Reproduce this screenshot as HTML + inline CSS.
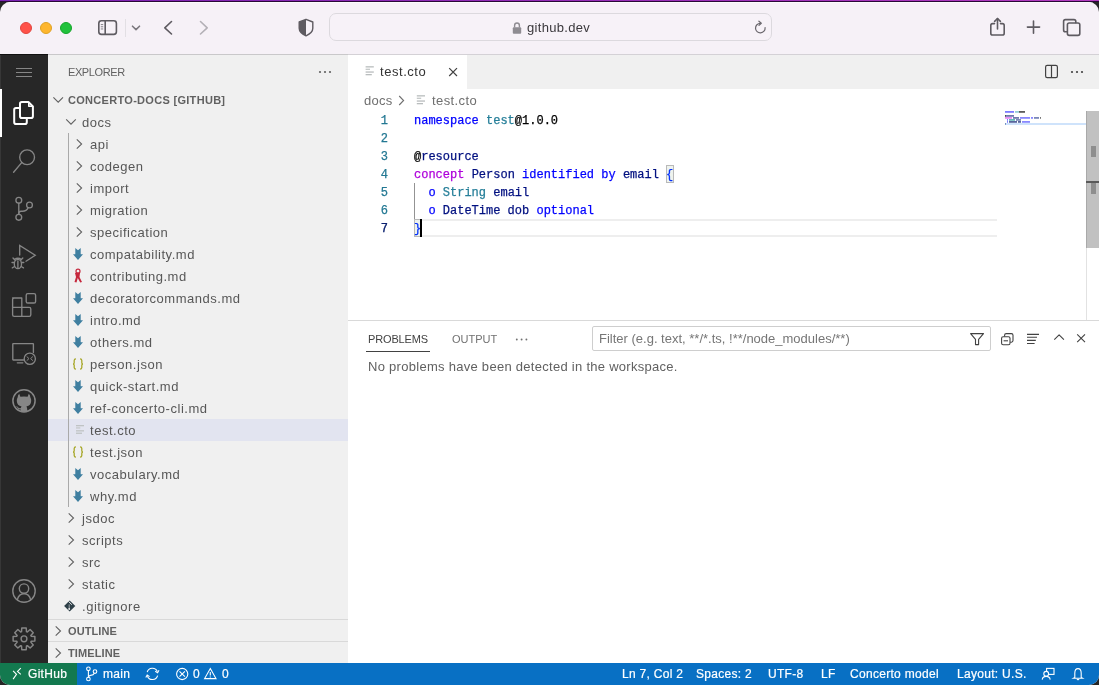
<!DOCTYPE html><html><head><meta charset="utf-8"><style>
*{margin:0;padding:0;box-sizing:border-box}
html,body{width:1099px;height:685px;overflow:hidden;background:#262626}
body{position:relative;font-family:"Liberation Sans",sans-serif;color:#616161;-webkit-font-smoothing:antialiased}
#win div{will-change:transform}
.a{position:absolute}
svg{position:absolute;overflow:visible}
#topline{left:0;top:0;width:1099px;height:1px;background:linear-gradient(90deg,#7a22b2,#9a2fb8 60%,#b43cc0)}
#topline2{left:0;top:1px;width:1099px;height:1px;background:#2a0838}
#win{left:0;top:0;width:1099px;height:685px;clip-path:inset(2px 0 0 0 round 10px);background:#f6f1f7}
#hl{left:0;top:2px;width:1099px;height:1px;background:#fdfcfd}
#tbborder{left:0;top:54px;width:1099px;height:1px;background:#d4d1d6}
.tl{width:12px;height:12px;border-radius:50%;top:22px}
#url{left:329px;top:13px;width:443px;height:28px;border:1px solid #dcd9de;border-radius:7px;background:#f7f2f8}
#urltext{left:527px;top:14px;height:28px;line-height:28px;font-size:13px;color:#3b393d;letter-spacing:0.3px}
#ab{left:0;top:55px;width:48px;height:608px;background:#272727;border-left:1px solid #373737}
#sb{left:48px;top:55px;width:300px;height:608px;background:#f0f0f0}
#ed{left:348px;top:55px;width:751px;height:608px;background:#fff}
#tabs{left:348px;top:55px;width:751px;height:34px;background:#f0f0f0}
#tab{left:348px;top:55px;width:119px;height:34px;background:#fff}
#status{left:77px;top:663px;width:1022px;height:22px;background:#0870c4}
#remote{left:0;top:663px;width:77px;height:22px;background:#13794f}
.t13{position:absolute;font-size:13px;line-height:22px;height:22px;padding-top:1px;white-space:nowrap;letter-spacing:0.52px;color:#575757}
.b11{position:absolute;font-size:11px;font-weight:bold;line-height:22px;height:22px;white-space:nowrap;color:#616161}
.code{position:absolute;left:414px;height:18px;line-height:18px;font-family:"Liberation Mono",monospace;font-size:12px;white-space:pre;color:#000;-webkit-text-stroke:0.25px currentColor}
.ln{position:absolute;left:360px;width:28px;text-align:right;height:18px;line-height:18px;font-family:"Liberation Mono",monospace;font-size:12px;color:#237893;-webkit-text-stroke:0.25px currentColor}
.bb{color:#0431fa}.k{color:#0000ff}.tt{color:#267f99}.v{color:#001080}.p{color:#af00db}
.st{position:absolute;top:663px;height:22px;line-height:22px;font-size:12px;color:#fff;white-space:nowrap;letter-spacing:0.3px;-webkit-text-stroke:0.2px #fff}
</style></head><body>
<div class="a" id="topline"></div><div class="a" id="topline2"></div>
<div class="a" id="win">
<div class="a" id="hl"></div><div class="a" id="tbborder"></div>
<div class="a tl" style="left:20px;background:#ff5249;border:0.6px solid #e0443e"></div>
<div class="a tl" style="left:40px;background:#feb62e;border:0.6px solid #dea123"></div>
<div class="a tl" style="left:60px;background:#21c23c;border:0.6px solid #14a42a"></div>
<div class="a" id="url"></div><div class="a" id="urltext">github.dev</div>
<svg style="left:0;top:0" width="1099" height="54" viewBox="0 0 1099 54">
  <g fill="none" stroke="#5e5b61" stroke-width="1.6" stroke-linecap="round" stroke-linejoin="round">
   <rect x="98.8" y="20.8" width="17.6" height="13.6" rx="2.6"/>
   <line x1="105.2" y1="21" x2="105.2" y2="34.2"/>
   <path d="M132.5 26.2 L136 29.6 L139.5 26.2" stroke="#7b787e"/>
   <path d="M171.5 21.5 L164.8 27.8 L171.5 34"/>
   <path d="M200.5 21.5 L207.2 27.8 L200.5 34" stroke="#b3b0b6"/>
   <path d="M760.4 23.3 A4.8 4.8 0 1 0 765.1 27.6" stroke-width="1.2" stroke="#69666c"/>
   <path d="M758.9 21.2 L761.3 23.3 L759 25.4" stroke-width="1.2" stroke="#69666c"/>
   <path d="M997.5 18.5 V29" />
   <path d="M994.6 21.4 L997.5 18.5 L1000.4 21.4"/>
   <path d="M994.5 23.6 H992.6 Q990.8 23.6 990.8 25.4 V33.2 Q990.8 35 992.6 35 H1002.4 Q1004.2 35 1004.2 33.2 V25.4 Q1004.2 23.6 1002.4 23.6 H1000.5"/>
   <path d="M1033.5 21 V33.2 M1027.4 27.1 H1039.6"/>
   <path d="M1066.6 31.8 H1065.4 Q1063.6 31.8 1063.6 30 V21.4 Q1063.6 19.6 1065.4 19.6 H1074 Q1075.8 19.6 1075.8 21.4 V22.6"/>
   <rect x="1067.4" y="23" width="12.4" height="12.4" rx="1.8"/>
  </g>
  <line x1="125.5" y1="19" x2="125.5" y2="37" stroke="#e2dfe4" stroke-width="1"/>
  <g fill="#8e8b91"><rect x="100.8" y="24" width="2.4" height="1.1"/><rect x="100.8" y="26.2" width="2.4" height="1.1"/><rect x="100.8" y="28.4" width="2.4" height="1.1"/></g>
  <path d="M306 19.3 L312.8 22 V28.3 Q312.8 32.8 306 35.8 Q299.2 32.8 299.2 28.3 V22 Z" fill="none" stroke="#5e5b61" stroke-width="1.4" stroke-linejoin="round"/>
  <path d="M306 19.3 L299.2 22 V28.3 Q299.2 32.8 306 35.8 Z" fill="#5e5b61"/>
  <rect x="512.8" y="27.2" width="8.4" height="6.6" rx="1" fill="#8f8c92"/>
  <path d="M514.6 27.5 V25.6 A2.4 2.6 0 0 1 519.4 25.6 V27.5" fill="none" stroke="#8f8c92" stroke-width="1.4"/>
 </svg>
<div class="a" id="ab"></div><div class="a" id="sb"></div><div class="a" id="ed"></div>
<div class="a" id="tabs"></div><div class="a" id="tab"></div>
<div class="a" style="left:0;top:54px;width:48px;height:1px;background:#111"></div>
<div class="a" style="left:48px;top:54px;width:300px;height:1px;background:#c9c8ca"></div>
<svg style="left:0;top:0" width="1" height="1">
<g fill="none" stroke="#868686" stroke-width="1.2">
 <path d="M16 68.5 H32 M16 72.5 H32 M16 76.5 H32"/>
</g>
<rect x="0" y="89" width="2" height="48" fill="#fff"/>
<g fill="none" stroke="#fff" stroke-width="2" stroke-linejoin="round">
 <path d="M20 107.9 H16 Q14.2 107.9 14.2 109.7 V122.2 Q14.2 124 16 124 H25 Q26.8 124 26.8 122.2 V118.1"/>
 <path d="M28.4 102 H21.8 Q20 102 20 103.8 V116.3 Q20 118.1 21.8 118.1 H31.1 Q32.9 118.1 32.9 116.3 V106.4 Z"/>
 <path d="M28.8 102.2 V106.2 H32.7" stroke-width="1.6"/>
</g>
<g fill="none" stroke="#868686" stroke-width="1.35" stroke-linecap="round">
 <circle cx="27.1" cy="157.2" r="7.4"/>
 <path d="M21.9 162.4 L13.6 172.3"/>
 <circle cx="18.8" cy="200.3" r="2.9"/>
 <circle cx="18.8" cy="217.3" r="2.9"/>
 <circle cx="29.5" cy="205" r="2.9"/>
 <path d="M18.8 203.2 V214.4"/>
 <path d="M28.2 207.6 Q26.5 211.2 22.5 211.2 H21 Q18.8 211.2 18.8 213.5"/>
 <path d="M19.7 255 V245.5 L35.2 255.3 L26 261.2"/>
 <ellipse cx="17.9" cy="264" rx="3.6" ry="4.6"/>
 <path d="M14.4 259.5 Q17.9 257 21.4 259.5"/>
 <path d="M12 262.5 H14.3 M21.5 262.5 H23.8 M12.3 267.8 L14.6 266.5 M23.5 267.8 L21.2 266.5 M13 258 L15 260 M22.8 258 L20.8 260 M17.9 261 V268"/>
 <path d="M12.6 298 H21.8 V316.4 H14.2 Q12.6 316.4 12.6 314.8 V299.6 Q12.6 298 14.2 298 Z" stroke-linejoin="round"/>
 <path d="M12.6 307.4 H29.2 Q30.8 307.4 30.8 309 V314.8 Q30.8 316.4 29.2 316.4 H21.8"/>
 <rect x="26.2" y="293.6" width="9.4" height="9.4" rx="1.6"/>
 <path d="M33.4 352.6 V344 Q33.4 343.6 33 343.6 H13.2 Q12.8 343.6 12.8 344 V359.6 Q12.8 360 13.2 360 H23.6"/>
 <path d="M17.3 362.8 H22.8"/>
 <circle cx="29.8" cy="358.8" r="5.6"/>
 <path d="M27 356.8 L29 358.6 L27 360.4 M32.6 356.8 L30.6 358.6 L32.6 360.4" stroke-width="1"/>
 <circle cx="24" cy="400.8" r="11.1" stroke-width="1.5"/>
 <circle cx="24" cy="591" r="11.2" stroke-width="1.4"/>
 <circle cx="24" cy="588.6" r="4.7" stroke-width="1.4"/>
 <path d="M17.3 599.6 Q19 593.8 24 593.8 Q29 593.8 30.7 599.6" stroke-width="1.4"/>
</g>
<path d="M19.2 393.8 L20.4 396.8 Q22 396.4 24 396.4 Q26 396.4 27.6 396.8 L28.8 393.8 Q30.2 395 30.4 397.6 Q31.4 399.2 31.2 401 Q31 405.6 26.4 406.4 Q27.2 407.4 27.2 409 V411.6 Q25.6 412 24 412 Q22.4 412 20.8 411.6 V409.5 Q18.4 410 17.2 407.6 Q16.8 406.6 15.8 406 Q17.4 406.4 18.2 407.4 Q19.2 408.6 20.8 408 Q21 407 21.6 406.4 Q17 405.6 16.8 401 Q16.6 399.2 17.6 397.6 Q17.8 395 19.2 393.8 Z" fill="#868686"/>
<g fill="none" stroke="#868686" stroke-width="1.25" stroke-linejoin="round">
 <path d="M21.53 631.61 L21.79 627.92 L26.21 627.92 L26.47 631.61 L27.33 631.97 L30.13 629.54 L33.26 632.67 L30.83 635.47 L31.19 636.33 L34.88 636.59 L34.88 641.01 L31.19 641.27 L30.83 642.13 L33.26 644.93 L30.13 648.06 L27.33 645.63 L26.47 645.99 L26.21 649.68 L21.79 649.68 L21.53 645.99 L20.67 645.63 L17.87 648.06 L14.74 644.93 L17.17 642.13 L16.81 641.27 L13.12 641.01 L13.12 636.59 L16.81 636.33 L17.17 635.47 L14.74 632.67 L17.87 629.54 L20.67 631.97 Z" stroke-width="1.45"/>
 <circle cx="24" cy="638.8" r="2.9" stroke-width="1.4"/>
</g>
</svg>
<div class="a" style="left:68px;top:61px;font-size:11px;line-height:22px;letter-spacing:-0.4px;color:#616161">EXPLORER</div>
<svg style="left:0;top:0" width="1" height="1"><g fill="#616161"><circle cx="320" cy="72" r="1.1"/><circle cx="325" cy="72" r="1.1"/><circle cx="330" cy="72" r="1.1"/></g></svg>
<div class="a" style="left:48px;top:419px;width:300px;height:22px;background:#e2e4f0"></div>
<div class="a" style="left:68px;top:133px;width:1px;height:374px;background:#a9a9a9"></div>
<div class="b11" style="left:68px;top:89px;letter-spacing:0.3px">CONCERTO-DOCS [GITHUB]</div>
<div class="t13" style="left:82px;top:111px">docs</div>
<div class="t13" style="left:90px;top:133px">api</div>
<div class="t13" style="left:90px;top:155px">codegen</div>
<div class="t13" style="left:90px;top:177px">import</div>
<div class="t13" style="left:90px;top:199px">migration</div>
<div class="t13" style="left:90px;top:221px">specification</div>
<div class="t13" style="left:90px;top:243px">compatability.md</div>
<div class="t13" style="left:90px;top:265px">contributing.md</div>
<div class="t13" style="left:90px;top:287px">decoratorcommands.md</div>
<div class="t13" style="left:90px;top:309px">intro.md</div>
<div class="t13" style="left:90px;top:331px">others.md</div>
<div class="t13" style="left:90px;top:353px">person.json</div>
<div class="t13" style="left:90px;top:375px">quick-start.md</div>
<div class="t13" style="left:90px;top:397px">ref-concerto-cli.md</div>
<div class="t13" style="left:90px;top:419px">test.cto</div>
<div class="t13" style="left:90px;top:441px">test.json</div>
<div class="t13" style="left:90px;top:463px">vocabulary.md</div>
<div class="t13" style="left:90px;top:485px">why.md</div>
<div class="t13" style="left:82px;top:507px">jsdoc</div>
<div class="t13" style="left:82px;top:529px">scripts</div>
<div class="t13" style="left:82px;top:551px">src</div>
<div class="t13" style="left:82px;top:573px">static</div>
<div class="t13" style="left:82px;top:595px">.gitignore</div>
<svg style="left:0;top:0" width="1" height="1"><g fill="none" stroke="#616161" stroke-width="1.1" stroke-linejoin="miter"><path d="M53.400000000000006 97.4 L58.2 102.2 L63.0 97.4"/><path d="M66.2 119.4 L71 124.2 L75.8 119.4"/><path d="M76.80000000000001 139.4 L81.60000000000001 144 L76.80000000000001 148.6"/><path d="M76.80000000000001 161.4 L81.60000000000001 166 L76.80000000000001 170.6"/><path d="M76.80000000000001 183.4 L81.60000000000001 188 L76.80000000000001 192.6"/><path d="M76.80000000000001 205.4 L81.60000000000001 210 L76.80000000000001 214.6"/><path d="M76.80000000000001 227.4 L81.60000000000001 232 L76.80000000000001 236.6"/><path d="M68.7 513.4 L73.5 518 L68.7 522.6"/><path d="M68.7 535.4 L73.5 540 L68.7 544.6"/><path d="M68.7 557.4 L73.5 562 L68.7 566.6"/><path d="M68.7 579.4 L73.5 584 L68.7 588.6"/></g></svg>
<svg style="left:0;top:0" width="1" height="1"><path d="M75.3 248 L78 250.2 L80.7 248 V254.2 H83 L78 260 L73 254.2 H75.3 Z" fill="#3f7fa0"/><g fill="#c5283d"><circle cx="78" cy="271.2" r="2" fill="none" stroke="#c5283d" stroke-width="1.2"/><path d="M75 273 Q78 272 80 273 L79.5 277 L82 282 L80.2 282.6 L77.8 278 L76.5 282.6 L74.5 282 L76 277 Z"/></g><path d="M75.3 292 L78 294.2 L80.7 292 V298.2 H83 L78 304 L73 298.2 H75.3 Z" fill="#3f7fa0"/><path d="M75.3 314 L78 316.2 L80.7 314 V320.2 H83 L78 326 L73 320.2 H75.3 Z" fill="#3f7fa0"/><path d="M75.3 336 L78 338.2 L80.7 336 V342.2 H83 L78 348 L73 342.2 H75.3 Z" fill="#3f7fa0"/><g fill="none" stroke="#a8a82c" stroke-width="1.3"><path d="M76 358.8 Q74.2 358.8 74.2 360.6 V362.8 Q74.2 364.0 73 364.0 Q74.2 364.0 74.2 365.2 V367.40000000000003 Q74.2 369.2 76 369.2"/><path d="M80 358.8 Q81.8 358.8 81.8 360.6 V362.8 Q81.8 364.0 83 364.0 Q81.8 364.0 81.8 365.2 V367.40000000000003 Q81.8 369.2 80 369.2"/></g><path d="M75.3 380 L78 382.2 L80.7 380 V386.2 H83 L78 392 L73 386.2 H75.3 Z" fill="#3f7fa0"/><path d="M75.3 402 L78 404.2 L80.7 402 V408.2 H83 L78 414 L73 408.2 H75.3 Z" fill="#3f7fa0"/><g fill="#bfc3c4"><rect x="76" y="425" width="8" height="1.3"/><rect x="76" y="427.4" width="4.3" height="1.1"/><rect x="76" y="430.2" width="8" height="1.3"/><rect x="76" y="432.6" width="6" height="1.3"/></g><g fill="none" stroke="#a8a82c" stroke-width="1.3"><path d="M76 446.8 Q74.2 446.8 74.2 448.6 V450.8 Q74.2 452.0 73 452.0 Q74.2 452.0 74.2 453.2 V455.40000000000003 Q74.2 457.2 76 457.2"/><path d="M80 446.8 Q81.8 446.8 81.8 448.6 V450.8 Q81.8 452.0 83 452.0 Q81.8 452.0 81.8 453.2 V455.40000000000003 Q81.8 457.2 80 457.2"/></g><path d="M75.3 468 L78 470.2 L80.7 468 V474.2 H83 L78 480 L73 474.2 H75.3 Z" fill="#3f7fa0"/><path d="M75.3 490 L78 492.2 L80.7 490 V496.2 H83 L78 502 L73 496.2 H75.3 Z" fill="#3f7fa0"/><g><path d="M69.7 600.4 L75.3 606 L69.7 611.6 L64.1 606 Z" fill="#2e3f48"/><path d="M68.6 601.5 L71.8 604.7" stroke="#f0f0f0" stroke-width="1"/><path d="M69.2 604.4 V609" stroke="#9aa2a6" stroke-width="1"/><circle cx="69.2" cy="609" r="0.9" fill="#f0f0f0"/></g></svg>
<div class="a" style="left:48px;top:619px;width:300px;height:1px;background:#d9d9d9"></div>
<div class="a" style="left:48px;top:641px;width:300px;height:1px;background:#d9d9d9"></div>
<div class="b11" style="left:68px;top:620px;letter-spacing:0.1px">OUTLINE</div>
<div class="b11" style="left:68px;top:642px;letter-spacing:0.1px">TIMELINE</div>
<svg style="left:0;top:0" width="1" height="1"><g fill="none" stroke="#616161" stroke-width="1.1"><path d="M55.699999999999996 626.4 L60.5 631 L55.699999999999996 635.6"/><path d="M55.699999999999996 648.4 L60.5 653 L55.699999999999996 657.6"/></g></svg>
<svg style="left:0;top:0" width="1" height="1"><g fill="#b9bdbe"><rect x="365.6" y="66.2" width="8.2" height="1.3"/><rect x="365.6" y="68.7" width="4.4" height="1.1"/><rect x="365.6" y="71.4" width="8.2" height="1.3"/><rect x="365.6" y="74" width="6.2" height="1.3"/></g><path d="M449.2 68.2 L457 76 M457 68.2 L449.2 76" stroke="#424242" stroke-width="1.2" fill="none"/><g fill="none" stroke="#424242" stroke-width="1.2"><rect x="1045.6" y="65.4" width="11.8" height="12.2" rx="1.6"/><path d="M1051.5 65.6 V77.4"/></g><g fill="#424242"><circle cx="1072" cy="72" r="1.1"/><circle cx="1077" cy="72" r="1.1"/><circle cx="1082" cy="72" r="1.1"/></g></svg>
<div class="a" style="left:380px;top:61px;font-size:13px;line-height:22px;color:#333;letter-spacing:0.55px">test.cto</div>
<div class="a" style="left:364px;top:90px;font-size:13px;line-height:22px;color:#6f6f6f;letter-spacing:0.3px">docs</div>
<div class="a" style="left:432px;top:90px;font-size:13px;line-height:22px;color:#6f6f6f;letter-spacing:0.4px">test.cto</div>
<svg style="left:0;top:0" width="1" height="1"><path d="M399.2 96 L403.6 100.5 L399.2 105" fill="none" stroke="#6f6f6f" stroke-width="1.1"/><g fill="#b9bdbe"><rect x="416.8" y="95.2" width="8.2" height="1.3"/><rect x="416.8" y="97.7" width="4.4" height="1.1"/><rect x="416.8" y="100.4" width="8.2" height="1.3"/><rect x="416.8" y="103" width="6.2" height="1.3"/></g></svg>
<div class="a" style="left:414px;top:219px;width:583px;height:18px;border-top:2px solid #eeeeee;border-bottom:2px solid #eeeeee"></div>
<div class="a" style="left:666px;top:165px;width:8px;height:18px;border:1px solid #b9b9b9;background:#eef3ee"></div>
<div class="a" style="left:414px;top:219px;width:7px;height:18px;border:1px solid #b9b9b9;background:#eef3ee"></div>
<div class="a" style="left:414px;top:183px;width:1px;height:36px;background:#939393"></div>
<div class="ln" style="top:112px">1</div>
<div class="code" style="top:112px"><span class="k">namespace</span> <span class="tt">test</span>@1.0.0</div>
<div class="ln" style="top:130px">2</div>
<div class="code" style="top:130px"></div>
<div class="ln" style="top:148px">3</div>
<div class="code" style="top:148px">@<span class="v">resource</span></div>
<div class="ln" style="top:166px">4</div>
<div class="code" style="top:166px"><span class="p">concept</span> <span class="v">Person</span> <span class="k">identified by</span> <span class="v">email</span> <span class="bb">{</span></div>
<div class="ln" style="top:184px">5</div>
<div class="code" style="top:184px">  <span class="k">o</span> <span class="tt">String</span> <span class="v">email</span></div>
<div class="ln" style="top:202px">6</div>
<div class="code" style="top:202px">  <span class="k">o</span> <span class="v">DateTime dob</span> <span class="k">optional</span></div>
<div class="ln" style="top:220px;color:#0b216f">7</div>
<div class="code" style="top:220px"><span class="bb">}</span></div>
<div class="a" style="left:420px;top:219px;width:2px;height:18px;background:#000"></div>
<svg style="left:0;top:0" width="1" height="1"><rect x="1005" y="123" width="81" height="2" fill="#cfe3fb"/><rect x="1005" y="111" width="9" height="1.8" fill="#5b5bff" opacity="0.8"/><rect x="1015" y="111" width="4" height="1.8" fill="#7fc4cc" opacity="0.8"/><rect x="1019" y="111" width="6" height="1.8" fill="#333" opacity="0.8"/><rect x="1005" y="115" width="1" height="1.8" fill="#222" opacity="0.8"/><rect x="1006" y="115" width="8" height="1.8" fill="#4b5a9a" opacity="0.8"/><rect x="1005" y="117" width="7" height="1.8" fill="#e070f0" opacity="0.8"/><rect x="1013" y="117" width="6" height="1.8" fill="#4b5a9a" opacity="0.8"/><rect x="1020" y="117" width="10" height="1.8" fill="#6a6aff" opacity="0.8"/><rect x="1031" y="117" width="2" height="1.8" fill="#6a6aff" opacity="0.8"/><rect x="1034" y="117" width="5" height="1.8" fill="#5a6aa8" opacity="0.8"/><rect x="1040" y="117" width="1" height="1.8" fill="#555" opacity="0.8"/><rect x="1007" y="119" width="1" height="1.8" fill="#5b5bff" opacity="0.8"/><rect x="1009" y="119" width="6" height="1.8" fill="#3ea7a8" opacity="0.8"/><rect x="1016" y="119" width="5" height="1.8" fill="#5a6aa8" opacity="0.8"/><rect x="1007" y="121" width="1" height="1.8" fill="#5b5bff" opacity="0.8"/><rect x="1009" y="121" width="8" height="1.8" fill="#2f3f86" opacity="0.8"/><rect x="1018" y="121" width="3" height="1.8" fill="#2f3f86" opacity="0.8"/><rect x="1022" y="121" width="8" height="1.8" fill="#6a6aff" opacity="0.8"/><rect x="1005" y="123" width="1" height="1.8" fill="#5b7bb0" opacity="0.8"/></svg>
<div class="a" style="left:1086px;top:248px;width:1px;height:72px;background:#e2e2e2"></div>
<div class="a" style="left:1086px;top:111px;width:13px;height:137px;background:#c1c1c1;border-left:1px solid #a9a9a9"></div>
<div class="a" style="left:1091px;top:146px;width:5px;height:11px;background:#8e8e8e"></div>
<div class="a" style="left:1086px;top:181px;width:13px;height:2px;background:#5a5a5a"></div>
<div class="a" style="left:1091px;top:183px;width:5px;height:11px;background:#8e8e8e"></div>
<div class="a" style="left:348px;top:320px;width:751px;height:1px;background:#d9d9d9"></div>
<div class="a" style="left:368px;top:328px;font-size:11px;line-height:22px;color:#424242;letter-spacing:-0.15px">PROBLEMS</div>
<div class="a" style="left:366px;top:351px;width:64px;height:1px;background:#424242"></div>
<div class="a" style="left:452px;top:328px;font-size:11px;line-height:22px;color:#717171;letter-spacing:0px">OUTPUT</div>
<svg style="left:0;top:0" width="1" height="1"><g fill="#717171"><circle cx="516.8" cy="339.5" r="0.95"/><circle cx="521.6" cy="339.5" r="0.95"/><circle cx="526.4" cy="339.5" r="0.95"/></g></svg>
<div class="a" style="left:368px;top:356px;font-size:13px;line-height:22px;color:#616161;letter-spacing:0.28px">No problems have been detected in the workspace.</div>
<div class="a" style="left:592px;top:326px;width:399px;height:25px;border:1px solid #cecece;border-radius:2px;background:#fff"></div>
<div class="a" style="left:599px;top:328px;font-size:13px;line-height:22px;color:#767676">Filter (e.g. text, **/*.ts, !**/node_modules/**)</div>
<svg style="left:0;top:0" width="1" height="1"><g fill="none" stroke="#424242" stroke-width="1.1" stroke-linejoin="round">
<path d="M970.6 333.6 H983.5 L978.6 339.4 V344.6 H975.5 V339.4 Z"/>
<path d="M1004.6 336.6 V335.2 Q1004.6 333.6 1006.2 333.6 H1011.4 Q1013 333.6 1013 335.2 V340.6 Q1013 342.2 1011.4 342.2 H1010.2"/>
<rect x="1001.6" y="336.8" width="8.4" height="8" rx="1.5"/>
<path d="M1003.6 340.8 H1008"/>
<path d="M1027 334.4 H1039 M1027 337.3 H1037 M1027 340.4 H1035.8 M1027 343.5 H1034.6"/>
<path d="M1054.3 339.6 L1059.1 334.8 L1063.9 339.6"/>
<path d="M1077.2 334.4 L1085 342.2 M1085 334.4 L1077.2 342.2"/>
</g></svg>
<div class="status-dummy"></div>
<div class="a" id="status"></div><div class="a" id="remote"></div>
<div class="st" style="left:28px">GitHub</div>
<div class="st" style="left:102.5px">main</div>
<div class="st" style="left:193px">0</div>
<div class="st" style="left:221.5px">0</div>
<div class="st" style="left:621.5px">Ln 7, Col 2</div>
<div class="st" style="left:696px">Spaces: 2</div>
<div class="st" style="left:768px">UTF-8</div>
<div class="st" style="left:820.5px">LF</div>
<div class="st" style="left:850px">Concerto model</div>
<div class="st" style="left:957px">Layout: U.S.</div>
<svg style="left:0;top:0" width="1" height="1"><g fill="none" stroke="#fff" stroke-width="1.1" stroke-linejoin="miter">
<path d="M13.1 670.9 L16.5 674.4 L13.1 679.1"/>
<path d="M20.8 668.2 L17.5 671.4 L20.8 674.3"/>
<circle cx="88.4" cy="668.8" r="1.8"/><circle cx="88.4" cy="679" r="1.8"/><circle cx="95" cy="671.6" r="1.8"/>
<path d="M88.4 670.6 V677.2"/><path d="M94.4 673.3 Q93.5 675.4 90.6 675.4 Q88.6 675.6 88.4 677.2"/>
<path d="M147.2 672.2 A5.4 5.4 0 0 1 157.4 671.6"/><path d="M157.6 675.6 A5.4 5.4 0 0 1 147.4 676.2"/>
<path d="M155.2 671.2 L157.6 672.8 L159 670.2" /><path d="M149.6 676.6 L147.2 675 L145.8 677.6"/>
<circle cx="182.2" cy="674" r="5.6"/>
<path d="M179.5 671.3 L184.9 676.7 M184.9 671.3 L179.5 676.7"/>
<path d="M210.3 668.6 L216 678.6 H204.6 Z"/>
<path d="M210.3 672 V675.6 M210.3 676.6 V677.6"/>
<rect x="1046.6" y="668.4" width="7.4" height="6" />
<circle cx="1046.2" cy="673.8" r="2.4" fill="#0870c4"/>
<path d="M1042.2 679.6 Q1042.6 676.4 1046.2 676.4 Q1049.8 676.4 1050.2 679.6"/>
<path d="M1074.8 677.4 V673.2 Q1074.8 668.6 1078 668.6 Q1081.2 668.6 1081.2 673.2 V677.4 L1082.6 678.2 H1073.4 Z"/>
<path d="M1076.8 679.6 H1079.2"/>
</g></svg>
</div></body></html>
